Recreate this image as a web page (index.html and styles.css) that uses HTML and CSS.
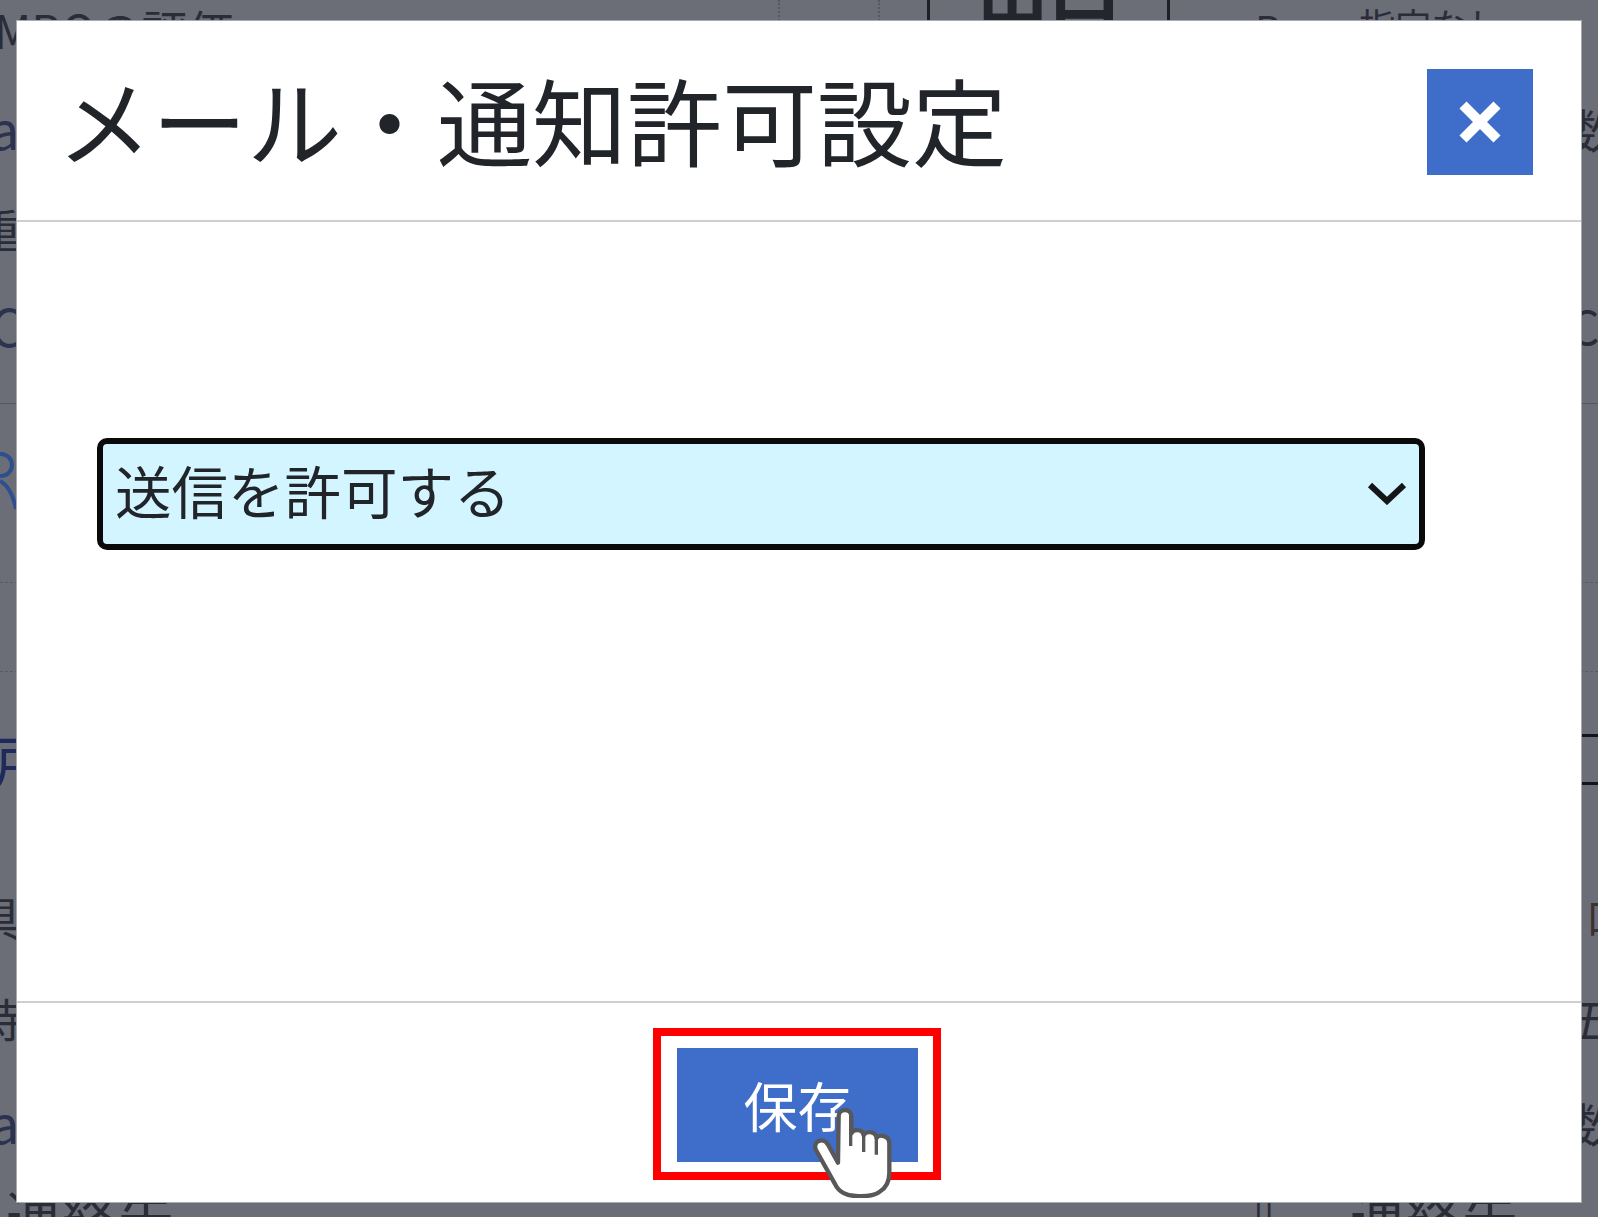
FILE: index.html
```html
<!DOCTYPE html>
<html lang="ja">
<head>
<meta charset="utf-8">
<title>メール・通知許可設定</title>
<link rel="stylesheet" href="styles.css">
</head>
<body>
<div class="backdrop">
  <div class="top-row">
    <span class="top-name">MBOの評価</span>
    <span class="dot-cell"></span>
    <span class="top-box"><b class="big">出口</b></span>
    <span class="top-b">B</span>
    <span class="top-none">指定なし</span>
  </div>
  <div class="row"><span class="l latin">a</span><span class="r">数</span></div>
  <div class="row"><span class="l">重</span><span class="r"></span></div>
  <div class="row"><span class="l latin">C</span><span class="r">C</span></div>
  <div class="row rule"></div>
  <div class="row">
    <svg class="person" viewBox="0 0 17 60"><circle cx="1" cy="14" r="11"/><path d="M0 30C8 34 13 44 16 58"/></svg>
    <span class="r"></span>
  </div>
  <div class="row dash"></div>
  <div class="row dash"></div>
  <div class="row"><span class="l navy">戸</span><span class="field"></span></div>
  <div class="row"><span class="l">具</span><span class="r brown">口</span></div>
  <div class="row"><span class="l">持</span><span class="r">五</span></div>
  <div class="row"><span class="l latin">a</span><span class="r">数</span></div>
  <div class="bottom-row">
    <span class="bot-a">連絡先、</span>
    <span class="bot-b">||</span>
    <span class="bot-c">連絡先、</span>
  </div>
</div>

<div class="modal">
  <header class="modal-head">
    <h1 class="modal-title">メール・通知許可設定</h1>
    <button class="close" type="button" aria-label="閉じる">
      <svg viewBox="0 0 42 42" class="close-x"><path d="M4 4L38 38M38 4L4 38"/></svg>
    </button>
  </header>
  <div class="modal-body">
    <div class="select-wrap">
      <select class="select"><option>送信を許可する</option></select>
      <svg class="chev" viewBox="0 0 40 24"><path d="M3 4L20 20L37 4"/></svg>
    </div>
  </div>
  <footer class="modal-foot">
    <div class="mark">
      <button class="save" type="button">保存</button>
    </div>
  </footer>
</div>

<svg class="hand" viewBox="636 326 240 270">
  <path class="hand-fill" d="M716 350C716 326 754 326 754 350V402C760 388 788 388 791 408C796 394 826 394 830 416C836 404 868 408 868 432V520C868 548 858 566 838 578C824 588 800 592 768 590C742 590 716 578 706 556L648 452C636 426 670 412 684 436L714 490Z"/>
  <path class="hand-line" d="M752 350V440M791 408V458M829 416V466"/>
</svg>
</body>
</html>
```
FILE: styles.css
```css
* { box-sizing: border-box; }
html, body { margin: 0; height: 100%; }
body {
  position: relative;
  width: 1598px;
  height: 1217px;
  overflow: hidden;
  background: #6b6e77;
  font-family: "Noto Sans CJK JP", "Noto Sans", sans-serif;
  color: #212529;
}

/* dimmed page behind the dialog */
.backdrop {
  display: grid;
  height: 1217px;
  grid-template-rows: 60px 135px 65px 130px 14px 154px 25px 89px 174px 140px 62px 148px 21px;
  font-size: 46px;
  line-height: 46px;
  color: #2a2d38;
}
.row {
  display: grid;
  grid-template-columns: 1570px 28px;
  align-items: center;
  overflow: hidden;
}
.l { margin-left: -24px; white-space: nowrap; }
.latin { margin-left: -10px; font-size: 52px; line-height: 52px; color: #2c3350; }
.r { white-space: nowrap; }
.navy { margin-left: -8px; color: #1f2a5c; font-size: 58px; line-height: 58px; }
.brown { color: #3a3230; font-size: 40px; line-height: 40px; margin-left: 16px; }
.rule { border-bottom: 1px solid #555860; }
.dash { border-bottom: 1px dashed #585b64; }
.field {
  grid-column: 2;
  height: 51px;
  border-top: 3px solid #14151a;
  border-bottom: 3px solid #14151a;
}
.person {
  width: 17px;
  height: 60px;
  fill: none;
  stroke: #2d4f8f;
  stroke-width: 4;
}
.top-row {
  display: flex;
  align-items: flex-start;
  height: 60px;
  overflow: hidden;
}
.top-name {
  width: 780px;
  flex: none;
  padding-top: 6px;
  font-size: 46px;
  line-height: 46px;
  text-indent: -6px;
  border-right: 2px dotted #555860;
  height: 60px;
}
.dot-cell {
  width: 100px;
  flex: none;
  height: 60px;
  border-right: 2px dotted #555860;
}
.top-box {
  flex: none;
  width: 243px;
  height: 60px;
  margin-left: 47px;
  border-left: 3px solid #1f2026;
  border-right: 3px solid #1f2026;
  text-align: center;
  overflow: hidden;
}
.big {
  display: block;
  margin-top: -48px;
  font-size: 72px;
  line-height: 72px;
  color: #24262e;
}
.top-b { margin-left: 85px; padding-top: 8px; font-size: 40px; line-height: 40px; }
.top-none { margin-left: 78px; padding-top: 6px; font-size: 36px; line-height: 36px; white-space: nowrap; }
.bottom-row {
  display: flex;
  align-items: flex-start;
  height: 21px;
  margin-top: -10px;
  font-size: 56px;
  line-height: 56px;
  white-space: nowrap;
}
.bot-a { width: 1253px; flex: none; text-indent: 6px; }
.bot-b { width: 97px; flex: none; font-size: 40px; line-height: 40px; }
.bot-c { flex: none; }

/* dialog */
.modal {
  position: absolute;
  left: 16px;
  top: 20px;
  width: 1566px;
  height: 1183px;
  display: flex;
  flex-direction: column;
  background: #fff;
  border: 1px solid #a9abb0;
}
.modal-head {
  display: flex;
  justify-content: space-between;
  align-items: flex-start;
  height: 201px;
  padding: 48px 48px 0 40px;
  border-bottom: 2px solid #cfcfcf;
}
.modal-title {
  margin: -5px 0 0;
  font-size: 95px;
  line-height: 110px;
  font-weight: 400;
  color: #212529;
  white-space: nowrap;
}
.close {
  display: flex;
  align-items: center;
  justify-content: center;
  width: 106px;
  height: 106px;
  padding: 0;
  border: 0;
  background: #3f6dca;
}
.close-x {
  width: 42px;
  height: 42px;
  fill: none;
  stroke: #fff;
  stroke-width: 10;
}
.modal-body {
  flex: 1;
  padding: 216px 0 0 80px;
}
.select-wrap {
  position: relative;
  width: 1328px;
  height: 112px;
}
.select {
  display: block;
  width: 100%;
  height: 100%;
  padding: 0 0 10px 12px;
  appearance: none;
  -webkit-appearance: none;
  border: 6px solid #0a0a0a;
  border-radius: 10px;
  background: #d2f5ff;
  color: #212529;
  font-family: inherit;
  font-size: 56.5px;
}
.chev {
  position: absolute;
  right: 18px;
  top: 43px;
  width: 40px;
  height: 24px;
  fill: none;
  stroke: #15161a;
  stroke-width: 6;
  pointer-events: none;
}
.modal-foot {
  display: flex;
  justify-content: center;
  height: 201px;
  padding: 25px 4px 0 0;
  border-top: 2px solid #cfcfcf;
}
.mark {
  width: 288px;
  height: 152px;
  padding: 12px 15px 10px 16px;
  border: 8px solid #ff0000;
}
.save {
  display: block;
  width: 100%;
  height: 100%;
  padding: 0;
  border: 0;
  background: #3f6dca;
  color: #fff;
  font-family: inherit;
  font-size: 54px;
  line-height: 1;
}

/* pointer over the save button */
.hand {
  position: absolute;
  left: 812px;
  top: 1108px;
  width: 80px;
  height: 90px;
}
.hand-fill {
  fill: #fff;
  stroke: #58585a;
  stroke-width: 13;
  stroke-linejoin: round;
}
.hand-line {
  fill: none;
  stroke: #58585a;
  stroke-width: 10;
}
```
